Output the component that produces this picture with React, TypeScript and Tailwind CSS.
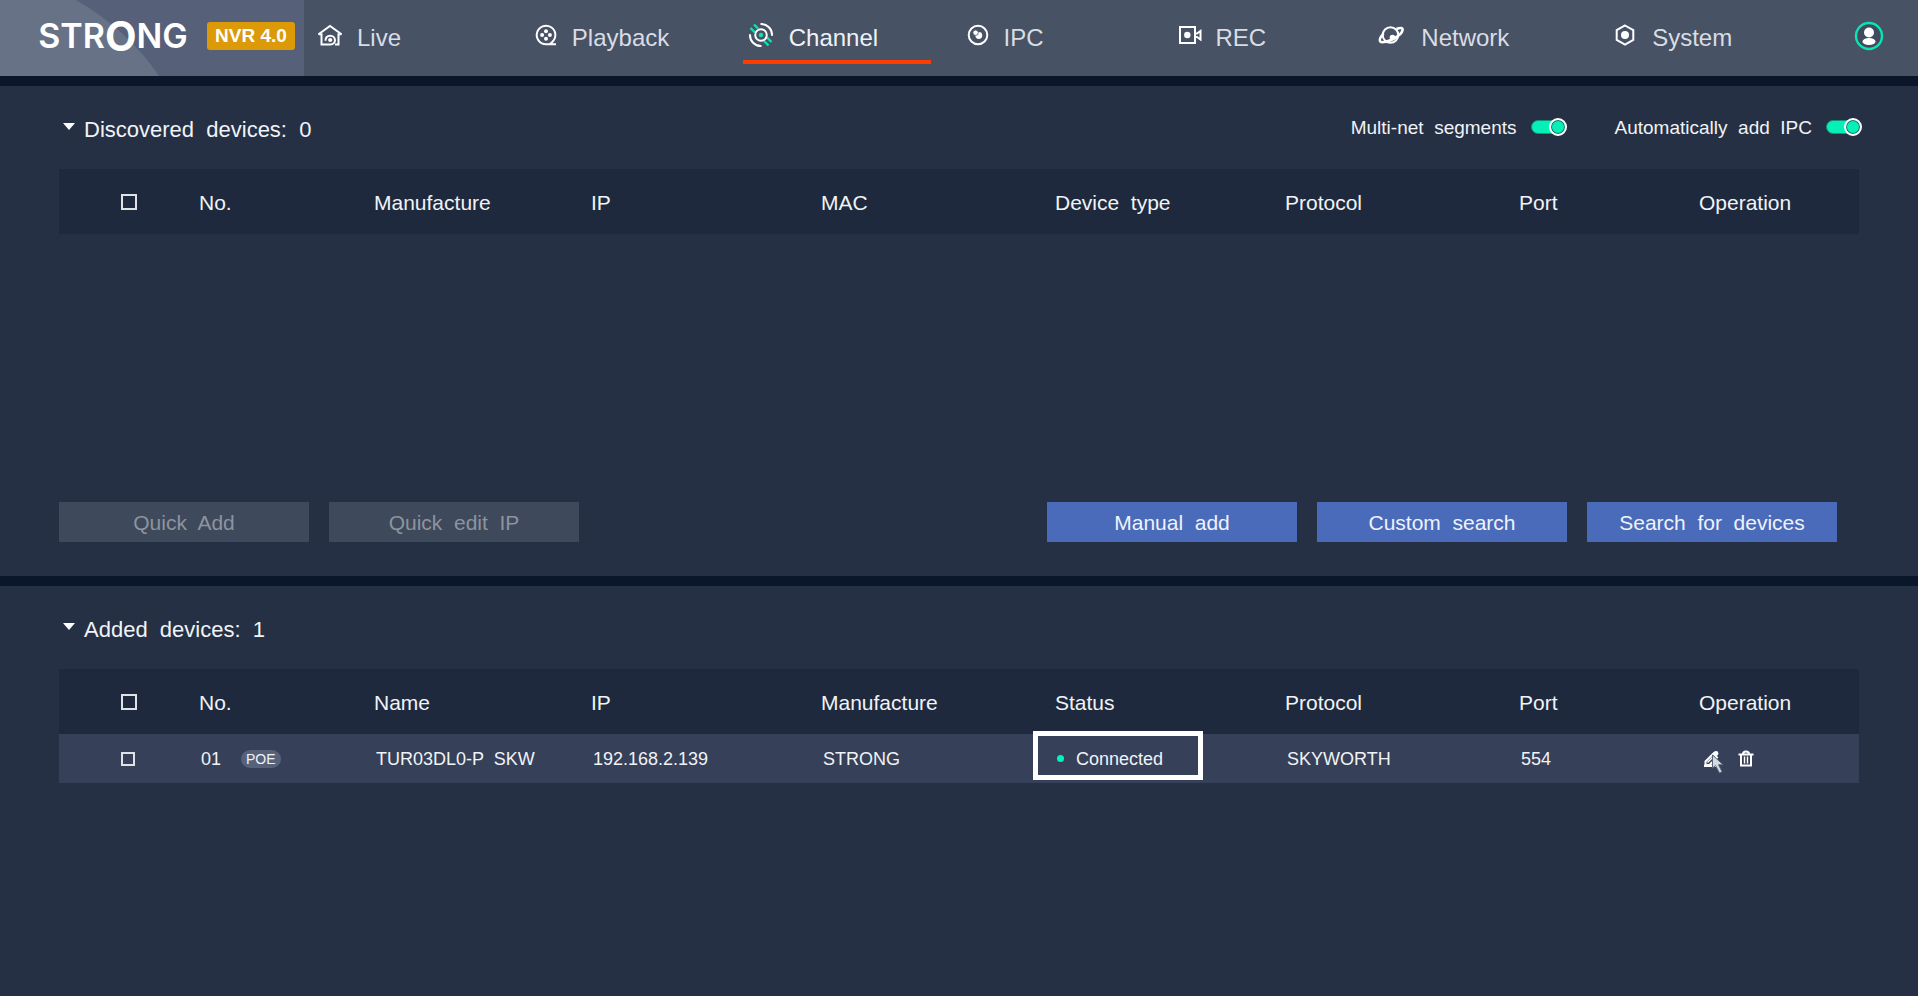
import React, { useState } from 'react';

interface NavItem {
  label: string;
  icon: React.ReactNode;
}

interface AddedDevice {
  no: string;
  poe: boolean;
  name: string;
  ip: string;
  manufacture: string;
  status: string;
  protocol: string;
  port: number;
}

const Icon: React.FC<{ children: React.ReactNode }> = ({ children }) => (
  <svg
    viewBox="0 0 28 28"
    className="size-7 shrink-0 overflow-visible"
    fill="none"
    stroke="#fff"
    strokeWidth="2"
    aria-hidden="true"
  >
    {children}
  </svg>
);

const navItems: NavItem[] = [
  {
    label: 'Live',
    icon: (
      <Icon>
        <path d="M2.5 13.2 14 5l11.5 8.2" />
        <path d="M2.5 13.2h3v10.3h9c6 0 6-8.700-.2-8.700-3 0-4.800 1.800-4.800 5M25.500 13.200h-3v10.300h-3.500" />
        <circle cx="14.200" cy="19" r="2.100" fill="#fff" stroke="none" />
      </Icon>
    ),
  },
  {
    label: 'Playback',
    icon: (
      <Icon>
        <path d="M25 23.300H15a9.300 9.300 0 1 1 6.500-2.600L19 23" />
        <g fill="#fff" stroke="none">
          <circle cx="15" cy="10.300" r="2" />
          <circle cx="18.900" cy="14" r="2" />
          <circle cx="15" cy="17.700" r="2" />
          <circle cx="11.100" cy="14" r="2" />
        </g>
      </Icon>
    ),
  },
  {
    label: 'Channel',
    icon: (
      <Icon>
        <path d="M12.500 3A11 11 0 0 1 24 14.800M13.500 25A11 11 0 0 1 2 13.200" />
        <g stroke="#12e0b0">
          <path d="m2.500 7 4.500 4.500M6 3.500 10 7.500M16 20l4.500 4.500M19 16.500l4.500 4.500" strokeWidth="2.400" />
        </g>
        <circle cx="13" cy="14" r="5.800" />
        <circle cx="13" cy="14" r="2.200" fill="#12e0b0" stroke="none" />
      </Icon>
    ),
  },
  {
    label: 'IPC',
    icon: (
      <Icon>
        <circle cx="15" cy="14" r="9.300" />
        <circle cx="15.800" cy="14.500" r="3.400" fill="#fff" stroke="none" />
        <circle cx="12.600" cy="11.700" r="2.700" fill="#fff" stroke="#475265" strokeWidth=".8" />
      </Icon>
    ),
  },
  {
    label: 'REC',
    icon: (
      <Icon>
        <path d="M6 6h15v16H6z" />
        <path d="M21 12.500h2L26.500 10v8.500L23 16h-2" />
        <circle cx="13.300" cy="14" r="3.200" fill="#fff" stroke="none" />
      </Icon>
    ),
  },
  {
    label: 'Network',
    icon: (
      <Icon>
        <circle cx="10.500" cy="14" r="7.800" />
        <path
          d="M16.500 8C20 6.500 23 6.500 22.600 9c-.6 3.500-4 6-8.500 8.500-5.500 3-12.500 5-14 2.800C-1 18.500.8 15.500 3.500 12.500"
          strokeWidth="2.600"
        />
        <circle cx="12.500" cy="16.500" r="2.800" fill="#fff" stroke="none" />
      </Icon>
    ),
  },
  {
    label: 'System',
    icon: (
      <Icon>
        <path d="m14 4.500 8.300 4.700v9.600L14 23.500l-8.300-4.700V9.200z" />
        <circle cx="14" cy="14" r="4" fill="#fff" stroke="none" />
      </Icon>
    ),
  },
];

const discoveredColumns = ['No.', 'Manufacture', 'IP', 'MAC', 'Device  type', 'Protocol', 'Port', 'Operation'];
const addedColumns = ['No.', 'Name', 'IP', 'Manufacture', 'Status', 'Protocol', 'Port', 'Operation'];

const addedDevices: AddedDevice[] = [
  {
    no: '01',
    poe: true,
    name: 'TUR03DL0-P  SKW',
    ip: '192.168.2.139',
    manufacture: 'STRONG',
    status: 'Connected',
    protocol: 'SKYWORTH',
    port: 554,
  },
];

const Header: React.FC<{ active: string; onSelect: (label: string) => void }> = ({ active, onSelect }) => (
  <header className="flex h-[76px] bg-[#475265] text-white">
    <div className="relative flex w-[304px] shrink-0 items-start bg-[#566079]">
      <svg viewBox="0 0 304 76" className="absolute inset-0 h-full w-full" aria-hidden="true">
        <path d="M0 0h76q52 30 83 76H0z" fill="#677286" />
      </svg>
      <div className="relative flex items-center pt-4 pl-9">
        <div className="flex h-10 w-[154px] items-center justify-center font-['Inter',sans-serif] text-[34px] leading-10 font-semibold">
          <span>STR</span>
          <span className="text-[41px] font-bold">O</span>
          <span>NG</span>
        </div>
        <span className="ml-[17px] flex h-7 w-22 items-center justify-center rounded-[3px] bg-[#dc9a08] text-[19px] font-bold">
          NVR 4.0
        </span>
      </div>
    </div>

    <nav className="grid flex-1 grid-cols-[215fr_217fr_215fr_212fr_206fr_231fr_248fr] pl-[7px]">
      {navItems.map(item => (
        <a key={item.label} href="#" onClick={() => onSelect(item.label)} className="flex flex-col pt-[18px]">
          <span className="flex items-center gap-[13px] pl-[5px]">
            {item.icon}
            <span
              className={`pt-1.5 text-[24px] leading-7 ${active === item.label ? 'text-[#eef2f6]' : 'text-[#d9dde3]'}`}
            >
              {item.label}
            </span>
          </span>
          {active === item.label && <span className="mt-2 h-1 w-7/8 bg-[#ff3d00]" />}
        </a>
      ))}
    </nav>

    <button aria-label="Account" className="mr-[34px] h-[72px] shrink-0">
      <svg viewBox="0 0 30 30" className="size-[30px]" aria-hidden="true">
        <circle cx="15" cy="15" r="13" fill="#3f4a5f" stroke="#0be3b0" strokeWidth="2.400" />
        <circle cx="15" cy="11.500" r="5" fill="#fff" />
        <ellipse cx="15" cy="20.500" rx="6.500" ry="3.600" fill="#fff" />
      </svg>
    </button>
  </header>
);

const SectionTitle: React.FC<{ text: string; open: boolean; onToggle: () => void; children?: React.ReactNode }> = ({
  text,
  open,
  onToggle,
  children,
}) => (
  <div className="flex h-[83px] items-center justify-between pt-[3px] pr-14 pl-[63px]">
    <h2 className="text-[22px]">
      <button onClick={onToggle} aria-expanded={open} className="flex items-center gap-[9px] whitespace-pre">
        <svg viewBox="0 0 12 12" className="size-3 shrink-0" aria-hidden="true">
          <path d={open ? 'M0 0h12L6 7z' : 'M2 0v12l7-6z'} fill="#fff" />
        </svg>
        {text}
      </button>
    </h2>
    {children}
  </div>
);

const Toggle: React.FC<{ label: string }> = ({ label }) => (
  <label className="flex items-center gap-3.5 text-[19px] whitespace-pre">
    <span className="pt-0.5">{label}</span>
    <input
      type="checkbox"
      role="switch"
      defaultChecked
      className="grid h-[18px] w-9 appearance-none items-center before:h-3.5 before:w-7 before:rounded-full before:border before:border-[#148f7c] before:bg-gray-500 before:content-[''] before:[grid-area:1/1] checked:before:bg-[#04f0b6] after:size-[18px] after:rounded-full after:border-2 after:border-white after:bg-gray-400 after:shadow-[inset_0_0_0_1px_#1c6a68] after:content-[''] after:[grid-area:1/1] checked:after:justify-self-end checked:after:bg-[#04f0b6]"
    />
  </label>
);

const DeviceTable: React.FC<{ columns: string[]; label: string; children?: React.ReactNode }> = ({
  columns,
  label,
  children,
}) => (
  <table aria-label={label} className="w-full table-fixed text-left whitespace-pre">
    <colgroup>
      <col className="w-[140px]" />
      <col className="w-[175px]" />
      <col className="w-[217px]" />
      <col className="w-[230px]" />
      <col className="w-[234px]" />
      <col className="w-[230px]" />
      <col className="w-[234px]" />
      <col className="w-[180px]" />
      <col className="w-[160px]" />
    </colgroup>
    <thead>
      <tr className="h-[65px] bg-[#1f293d] text-[21px]">
        <th className="pl-[62px] font-normal">
          <input
            type="checkbox"
            aria-label="Select all"
            className="block size-4 appearance-none border-2 border-[#dfe3e7] checked:bg-[#04f0b6]"
          />
        </th>
        {columns.map(column => (
          <th key={column} className="pt-0.5 font-normal">
            {column}
          </th>
        ))}
      </tr>
    </thead>
    <tbody>{children}</tbody>
  </table>
);

const DeviceRow: React.FC<{ device: AddedDevice }> = ({ device }) => (
  <tr className="h-[49px] bg-[#364058] text-[18px]">
    <td className="pl-[62px]">
      <input
        type="checkbox"
        aria-label={`Select ${device.no}`}
        className="block size-3.5 appearance-none border-2 border-[#dfe3e7] checked:bg-[#04f0b6]"
      />
    </td>
    <td>
      <div className="flex items-center gap-5 pl-0.5">
        <span className="pt-0.5">{device.no}</span>
        {device.poe && (
          <span className="rounded-full bg-[#56617a] px-[5px] text-[14px] leading-[18px]">POE</span>
        )}
      </div>
    </td>
    <td className="pt-0.5 pl-0.5">{device.name}</td>
    <td className="pt-0.5 pl-0.5">{device.ip}</td>
    <td className="pt-0.5 pl-0.5">{device.manufacture}</td>
    <td className="relative">
      <span className="absolute -top-[3px] -left-[22px] h-[49px] w-[170px] border-5 border-white" />
      <div className="flex items-center gap-3 pl-0.5">
        <span className="size-[7px] rounded-full bg-[#04f0c0]" />
        <span className="pt-0.5">{device.status}</span>
      </div>
    </td>
    <td className="pt-0.5 pl-0.5">{device.protocol}</td>
    <td className="pt-0.5 pl-0.5">{device.port}</td>
    <td>
      <div className="flex items-center gap-4 pl-1">
        <button aria-label="Edit" className="relative">
          <svg viewBox="0 0 18 18" className="size-[18px]" fill="none" stroke="#fff" strokeWidth="2" aria-hidden="true">
            <path d="M10.500 3.500 2.500 11.500v3.500h4L14 7.500z" />
            <path d="m4.500 12.500 6-6" strokeWidth="1.500" />
            <path d="M1 15.800h14" strokeWidth="2.400" />
            <circle cx="13" cy="3.500" r="2.400" fill="#fff" stroke="none" />
          </svg>
          {/* Mouse pointer */}
          <svg viewBox="0 0 14 20" className="absolute top-1 left-2 h-5 w-3.5" aria-hidden="true">
            <path d="M1.500 1v13l3-2.500 4 7.500 2.500-1.300-3.500-7H12z" fill="#d5dae2" stroke="#5a657a" strokeWidth="1" />
          </svg>
        </button>
        <button aria-label="Delete">
          <svg viewBox="0 0 18 18" className="size-[18px]" fill="none" stroke="#fff" strokeWidth="2" aria-hidden="true">
            <path d="M1.500 4.500h15M6 4q0-2.500 3-2.500T12 4M4 4.500v11h10v-11" />
            <path d="M7.500 6.500v7M10.500 6.500v7" strokeWidth="1.400" />
          </svg>
        </button>
      </div>
    </td>
  </tr>
);

const ActionButton: React.FC<{ label: string; disabled?: boolean }> = ({ label, disabled }) => (
  <button
    disabled={disabled}
    className="h-10 w-[250px] bg-[#4a6aba] pt-0.5 text-[21px] whitespace-pre text-[#eef3fb] disabled:bg-[#3e495c] disabled:text-[#8d949e]"
  >
    {label}
  </button>
);

export default function App() {
  const [active, setActive] = useState('Channel');
  const [showDiscovered, setShowDiscovered] = useState(true);
  const [showAdded, setShowAdded] = useState(true);

  return (
    <div className="flex min-h-screen flex-col gap-2.5 bg-[#0a162a] font-['Liberation_Sans',Arial,sans-serif] text-[#f0f3f7]">
      <Header active={active} onSelect={setActive} />

      <main className="flex flex-1 flex-col gap-2.5">
        <section className="bg-[#253044] pb-[34px]">
          <SectionTitle
            text="Discovered  devices:  0"
            open={showDiscovered}
            onToggle={() => setShowDiscovered(!showDiscovered)}
          >
            <div className="flex items-center gap-12 pb-1">
              <Toggle label="Multi-net  segments" />
              <Toggle label="Automatically  add  IPC" />
            </div>
          </SectionTitle>
          <div className="px-[59px]">
            <div className="min-h-[333px]">
              {showDiscovered && <DeviceTable columns={discoveredColumns} label="Discovered devices" />}
            </div>
            <div className="flex gap-5 pr-[22px]">
              <ActionButton label="Quick  Add" disabled />
              <ActionButton label="Quick  edit  IP" disabled />
              <div className="ml-auto flex gap-5">
                <ActionButton label="Manual  add" />
                <ActionButton label="Custom  search" />
                <ActionButton label="Search  for  devices" />
              </div>
            </div>
          </div>
        </section>

        <section className="flex-1 bg-[#253044]">
          <SectionTitle text="Added  devices:  1" open={showAdded} onToggle={() => setShowAdded(!showAdded)} />
          <div className="px-[59px]">
            {showAdded && (
              <DeviceTable columns={addedColumns} label="Added devices">
                {addedDevices.map(device => (
                  <DeviceRow key={device.no} device={device} />
                ))}
              </DeviceTable>
            )}
          </div>
        </section>
      </main>
    </div>
  );
}
